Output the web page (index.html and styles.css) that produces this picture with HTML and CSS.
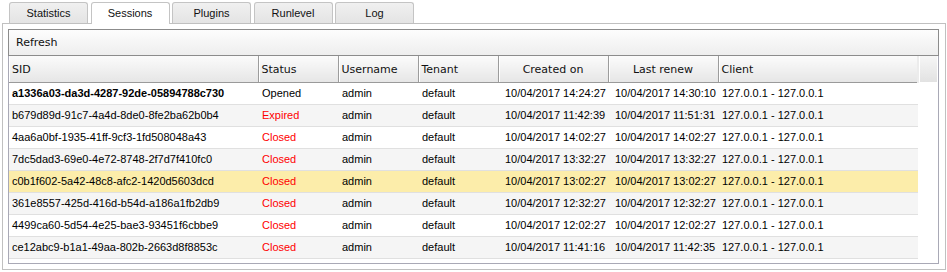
FILE: index.html
```html
<!DOCTYPE html>
<html lang="en">
<head>
  <meta charset="UTF-8" />
  <title>Sessions</title>
  <link rel="stylesheet" href="styles.css">
</head>
<body>
  <div class="tabs">
    <div class="tab">Statistics</div>
    <div class="tab active">Sessions</div>
    <div class="tab">Plugins</div>
    <div class="tab">Runlevel</div>
    <div class="tab">Log</div>
  </div>

  <div class="panel">
    <div class="grid">
      <div class="toolbar">Refresh</div>
      <table class="sessions">
        <colgroup>
          <col style="width:249px"><col style="width:80px"><col style="width:80px"><col style="width:80px">
          <col style="width:110px"><col style="width:110px"><col style="width:200px"><col style="width:19px">
        </colgroup>
        <thead>
          <tr>
            <th>SID</th>
            <th>Status</th>
            <th>Username</th>
            <th>Tenant</th>
            <th class="center">Created on</th>
            <th class="center">Last renew</th>
            <th>Client</th>
            <th class="filler"></th>
          </tr>
        </thead>
        <tbody>
          <tr class="current">
            <td class="sid">a1336a03-da3d-4287-92de-05894788c730</td>
            <td>Opened</td><td>admin</td><td>default</td>
            <td class="date">10/04/2017 14:24:27</td><td class="date">10/04/2017 14:30:10</td>
            <td>127.0.0.1 - 127.0.0.1</td><td class="gap"></td>
          </tr>
          <tr class="alt">
            <td>b679d89d-91c7-4a4d-8de0-8fe2ba62b0b4</td>
            <td class="bad">Expired</td><td>admin</td><td>default</td>
            <td class="date">10/04/2017 11:42:39</td><td class="date">10/04/2017 11:51:31</td>
            <td>127.0.0.1 - 127.0.0.1</td><td class="gap"></td>
          </tr>
          <tr>
            <td>4aa6a0bf-1935-41ff-9cf3-1fd508048a43</td>
            <td class="bad">Closed</td><td>admin</td><td>default</td>
            <td class="date">10/04/2017 14:02:27</td><td class="date">10/04/2017 14:02:27</td>
            <td>127.0.0.1 - 127.0.0.1</td><td class="gap"></td>
          </tr>
          <tr class="alt">
            <td>7dc5dad3-69e0-4e72-8748-2f7d7f410fc0</td>
            <td class="bad">Closed</td><td>admin</td><td>default</td>
            <td class="date">10/04/2017 13:32:27</td><td class="date">10/04/2017 13:32:27</td>
            <td>127.0.0.1 - 127.0.0.1</td><td class="gap"></td>
          </tr>
          <tr class="selected">
            <td>c0b1f602-5a42-48c8-afc2-1420d5603dcd</td>
            <td class="bad">Closed</td><td>admin</td><td>default</td>
            <td class="date">10/04/2017 13:02:27</td><td class="date">10/04/2017 13:02:27</td>
            <td>127.0.0.1 - 127.0.0.1</td><td class="gap"></td>
          </tr>
          <tr class="alt">
            <td>361e8557-425d-416d-b54d-a186a1fb2db9</td>
            <td class="bad">Closed</td><td>admin</td><td>default</td>
            <td class="date">10/04/2017 12:32:27</td><td class="date">10/04/2017 12:32:27</td>
            <td>127.0.0.1 - 127.0.0.1</td><td class="gap"></td>
          </tr>
          <tr>
            <td>4499ca60-5d54-4e25-bae3-93451f6cbbe9</td>
            <td class="bad">Closed</td><td>admin</td><td>default</td>
            <td class="date">10/04/2017 12:02:27</td><td class="date">10/04/2017 12:02:27</td>
            <td>127.0.0.1 - 127.0.0.1</td><td class="gap"></td>
          </tr>
          <tr class="alt">
            <td>ce12abc9-b1a1-49aa-802b-2663d8f8853c</td>
            <td class="bad">Closed</td><td>admin</td><td>default</td>
            <td class="date">10/04/2017 11:41:16</td><td class="date">10/04/2017 11:42:35</td>
            <td>127.0.0.1 - 127.0.0.1</td><td class="gap"></td>
          </tr>
        </tbody>
      </table>
    </div>
  </div>
</body>
</html>
```

FILE: styles.css
```css
body {
  margin: 0;
  padding: 2px 0 0 2px;
  width: 944px;
  background: #fff;
  font-family: "Liberation Sans", Arial, sans-serif;
  font-size: 11px;
  color: #000;
}

.tabs {
  display: flex;
  gap: 2.5px;
  padding-left: 7px;
  height: 21px;
  position: relative;
  z-index: 1;
}

.tab {
  width: 77px;
  height: 20px;
  line-height: 20px;
  text-align: center;
  background: linear-gradient(#f0f0f0, #e4e4e4);
  border: 1px solid #c4c4c4;
  border-bottom: none;
  border-radius: 3px 3px 0 0;
  color: #111;
}

.tab.active {
  background: #fff;
  height: 21px;
}

.panel {
  border: 1px solid #c0c0c0;
  padding: 5px 6px 5px 5px;
}

.grid {
  border: 1px solid #a9a9b6;
  border-top: none;
  height: 234px;
}

.toolbar {
  margin: 0 -1px;
  height: 25px;
  line-height: 25px;
  padding-left: 7px;
  border: 1px solid #8c8c8c;
  background: linear-gradient(#fdfdfd, #eeeeee);
  font-family: "DejaVu Sans", Verdana, sans-serif;
  font-size: 11px;
  color: #111;
}

.sessions {
  border-collapse: collapse;
  table-layout: fixed;
  width: 928px;
}

.sessions th {
  height: 26px;
  box-sizing: border-box;
  padding: 2px 0 0 3px;
  text-align: left;
  font-family: "DejaVu Sans", Verdana, sans-serif;
  font-weight: normal;
  font-size: 11px;
  color: #111;
  background: linear-gradient(#fbfbfb, #e6e6e6);
  border-bottom: 1px solid #9a9a9a;
  border-left: 1px solid #9c9c9c;
  box-shadow: inset 1px 0 0 #fff;
}

.sessions th:first-child {
  border-left: none;
}

.sessions th.center {
  text-align: center;
  padding-left: 0;
}

.sessions th.filler {
  border-left: 2px solid #ececec;
  border-bottom: none;
  background: linear-gradient(#f6f6f6, #e2e2e2);
}

.sessions td {
  height: 21px;
  padding: 0 0 0 3px;
  white-space: nowrap;
  overflow: hidden;
  border-bottom: 1px solid #e0e0e0;
}

.sessions td:nth-child(n+2) {
  padding-left: 4px;
}

.sessions td.date {
  padding-left: 7px;
}

.sessions td.gap {
  background: #fff;
  border-bottom: none;
}

.sessions tr.alt td:not(.gap) {
  background: #f5f5f5;
}

.sessions tr.selected td:not(.gap) {
  background: #fcedaa;
}

.sessions td.sid {
  font-weight: bold;
}

.sessions td.bad {
  color: #f00;
}
```
